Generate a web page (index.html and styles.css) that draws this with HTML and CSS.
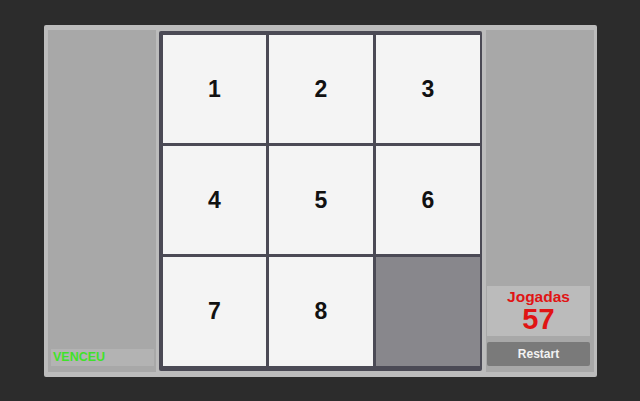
FILE: index.html
```html
<!DOCTYPE html>
<html>
<head>
<meta charset="utf-8">
<link rel="stylesheet" href="styles.css">
</head>
<body>
<div class="frame">
  <div class="side left">
    <div class="status">VENCEU</div>
  </div>
  <div class="board">
    <div class="tile">1</div>
    <div class="tile">2</div>
    <div class="tile">3</div>
    <div class="tile">4</div>
    <div class="tile">5</div>
    <div class="tile">6</div>
    <div class="tile">7</div>
    <div class="tile">8</div>
    <div class="tile empty"></div>
  </div>
  <div class="side right">
    <div class="score">
      <div class="score-label">Jogadas</div>
      <div class="score-value">57</div>
    </div>
    <div class="restart">Restart</div>
  </div>
</div>
</body>
</html>
```
FILE: styles.css
```css
html, body {
  margin: 0;
  padding: 0;
  background: #2c2c2c;
  width: 640px;
  height: 401px;
  overflow: hidden;
  font-family: "Liberation Sans", Arial, sans-serif;
}
.frame {
  position: relative;
  margin: 25px 0 0 44px;
  width: 553px;
  height: 352px;
  box-sizing: border-box;
  padding: 5px 3px 5px 4px;
  background: #bcbcbc;
  border-radius: 2px;
  display: flex;
  gap: 3px;
}
.side {
  width: 108px;
  background: #a8a8a8;
  display: flex;
  flex-direction: column;
  justify-content: flex-end;
  box-sizing: border-box;
}
.left {
  padding: 0 2px 6px 3px;
}
.right {
  margin-left: 1px;
  padding: 0 4px 6px 1px;
}
.status {
  height: 17px;
  background: #b3b3b3;
  color: #3fe22a;
  font-weight: bold;
  font-size: 12.5px;
  line-height: 17px;
  padding-left: 2px;
}
.board {
  margin-top: 1px;
  width: 323px;
  height: 340px;
  box-sizing: border-box;
  background: #4b4a55;
  padding: 4px 3px 3px 4px;
  display: grid;
  grid-template-columns: 103px 104px 104px;
  grid-template-rows: 108px 108px 109px;
  gap: 3px;
  border-radius: 2px;
}
.tile {
  background: #f4f4f4;
  display: flex;
  align-items: center;
  justify-content: center;
  font-weight: bold;
  font-size: 23px;
  color: #111;
}
.tile.empty {
  background: #88878c;
}
.score {
  height: 50px;
  background: #bbbbbb;
  display: flex;
  flex-direction: column;
  align-items: center;
  color: #e01414;
  font-weight: bold;
}
.score-label {
  font-size: 15.5px;
  margin-top: 2px;
  line-height: 17px;
}
.score-value {
  font-size: 29px;
  line-height: 29px;
}
.restart {
  margin-top: 6px;
  height: 24px;
  background: #7a7a7a;
  border-radius: 2px;
  color: #f2f2f2;
  font-weight: bold;
  font-size: 12px;
  line-height: 24px;
  text-align: center;
}
```
